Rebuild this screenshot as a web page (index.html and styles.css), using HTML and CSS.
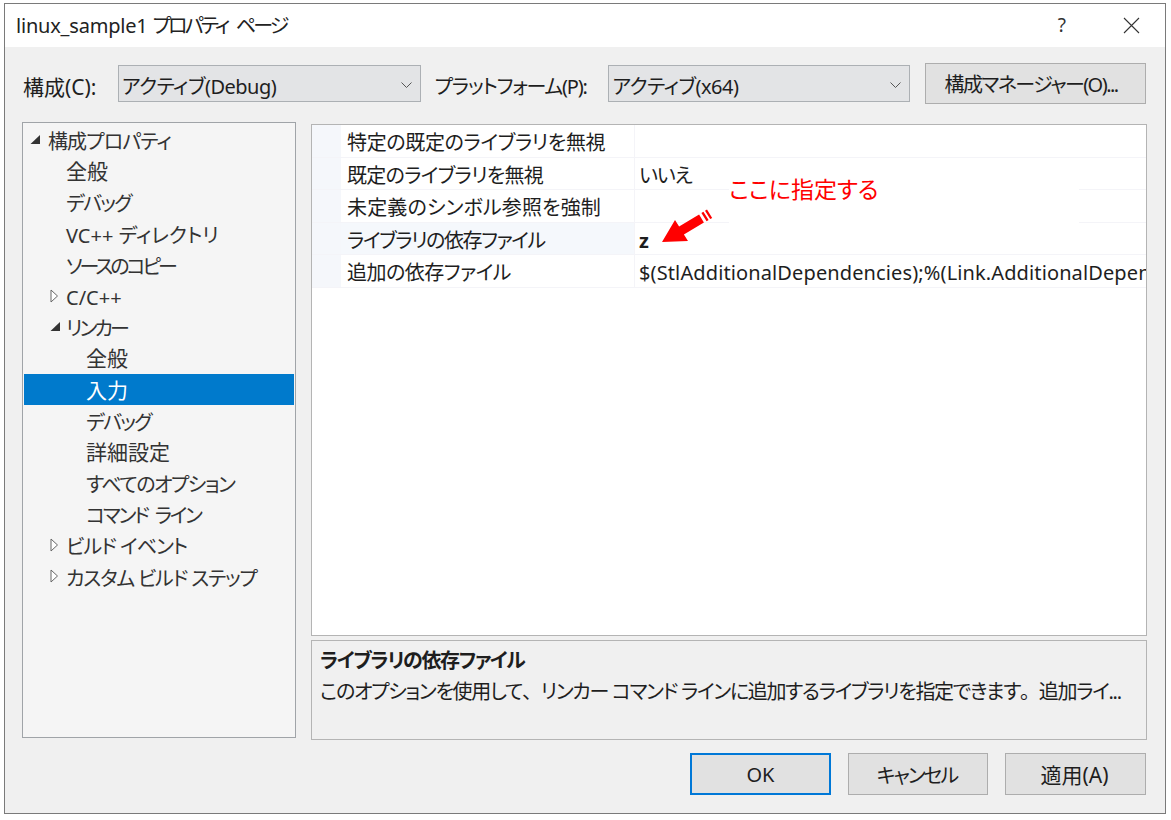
FILE: index.html
```html
<!DOCTYPE html>
<html lang="ja">
<head>
<meta charset="utf-8">
<title>linux_sample1 プロパティ ページ</title>
<link rel="stylesheet" href="styles.css">
</head>
<body>
<div class="window">
  <header class="titlebar">
    <span class="title">linux_sample1 <span class="title-ja">プロパティ ページ</span></span>
    <span class="help">?</span>
    <svg class="close" width="17" height="17" viewBox="0 0 17 17"><path d="M1 1 16 16M16 1 1 16" stroke="#333" stroke-width="1.1" fill="none"/></svg>
  </header>
  <div class="toolbar">
    <span class="label label-config big">構成(C):</span>
    <div class="combo"><span class="ls-05">アクティブ(Debug)</span><svg width="11" height="7" viewBox="0 0 11 7"><path d="M.5 .5 5.5 5.5 10.5 .5" stroke="#555" fill="none"/></svg></div>
    <span class="label label-platform">プラットフォーム(P):</span>
    <div class="combo combo-platform"><span class="ls-05">アクティブ(x64)</span><svg width="11" height="7" viewBox="0 0 11 7"><path d="M.5 .5 5.5 5.5 10.5 .5" stroke="#555" fill="none"/></svg></div>
    <button class="btn btn-manager">構成マネージャー(O)...</button>
  </div>
  <main class="main">
    <nav class="tree">
      <div class="node l0 ls-09"><svg class="tw" width="11" height="10" viewBox="0 0 11 10"><path d="M0.5 9 10 9 10 0Z" fill="#333"/></svg>構成プロパティ</div>
      <div class="node l1 big">全般</div>
      <div class="node l1 ls-17">デバッグ</div>
      <div class="node l1">VC++ ディレクトリ</div>
      <div class="node l1 ls-30">ソースのコピー</div>
      <div class="node l1 arrowed"><svg class="tw" width="9" height="14" viewBox="0 0 9 14"><path d="M1 1 7.5 7 1 13Z" fill="#fff" stroke="#666"/></svg>C/C++</div>
      <div class="node l1 arrowed ls-28"><svg class="tw" width="11" height="10" viewBox="0 0 11 10"><path d="M0.5 9 10 9 10 0Z" fill="#333"/></svg>リンカー</div>
      <div class="node l2 big">全般</div>
      <div class="node l2 selected big">入力</div>
      <div class="node l2 ls-17">デバッグ</div>
      <div class="node l2 big">詳細設定</div>
      <div class="node l2 ls-15">すべてのオプション</div>
      <div class="node l2 ls-cmd">コマンド ライン</div>
      <div class="node l1 arrowed ls-10"><svg class="tw" width="9" height="14" viewBox="0 0 9 14"><path d="M1 1 7.5 7 1 13Z" fill="#fff" stroke="#666"/></svg>ビルド イベント</div>
      <div class="node l1 arrowed ls-12"><svg class="tw" width="9" height="14" viewBox="0 0 9 14"><path d="M1 1 7.5 7 1 13Z" fill="#fff" stroke="#666"/></svg>カスタム ビルド ステップ</div>
    </nav>
    <section class="right">
      <div class="grid">
        <div class="row"><div class="strip"></div><div class="name ls-03">特定の既定のライブラリを無視</div><div class="value"></div></div>
        <div class="row"><div class="strip"></div><div class="name ls-07">既定のライブラリを無視</div><div class="value ls-10">いいえ</div></div>
        <div class="row"><div class="strip"></div><div class="name ls-p">未定義のシンボル参照を強制</div><div class="value"></div></div>
        <div class="row active"><div class="strip"></div><div class="name ls-14">ライブラリの依存ファイル</div><div class="value strong">z</div></div>
        <div class="row"><div class="strip"></div><div class="name ls-05">追加の依存ファイル</div><div class="value latin">$(StlAdditionalDependencies);%(Link.AdditionalDependencies)</div></div>
        <div class="note">ここに指定する</div>
        <svg class="pointer" width="60" height="40" viewBox="0 0 60 40">
          <path d="M0 33 13 11 17.1 17.6 37.1 5.6 41.9 13.4 21.9 25.4 26 32Z" fill="#f00"/>
          <path d="M41.4 2.7 46.6 11.1 44.6 12.3 39.4 3.9ZM45 .5 50.2 8.9 48.2 10.1 43 1.7Z" fill="#f00"/>
        </svg>
      </div>
      <div class="desc">
        <div class="desc-title ls-14">ライブラリの依存ファイル</div>
        <div class="desc-body">このオプションを使用して<span class="punct">、</span>リンカー コマンド ラインに追加するライブラリを指定できます<span class="punct">。</span>追加ライ...</div>
      </div>
    </section>
  </main>
  <footer class="footer">
    <button class="btn btn-foot btn-default">OK</button>
    <button class="btn btn-foot btn-cancel">キャンセル</button>
    <button class="btn btn-foot btn-apply">適用(A)</button>
  </footer>
</div>
</body>
</html>
```

FILE: styles.css
```css
* { box-sizing: border-box; }
html, body { margin: 0; padding: 0; background: #fff; }
body {
  width: 1171px;
  height: 820px;
  overflow: hidden;
  font-family: "Noto Sans", "Noto Sans CJK JP", sans-serif;
  font-size: 20px;
  font-feature-settings: "palt";
  color: #1e1e1e;
}
.big { font-size: 21px; }
.ls-p { letter-spacing: 0.15px; }
.ls-03 { letter-spacing: -0.35px; }
.ls-05 { letter-spacing: -0.5px; }
.ls-07 { letter-spacing: -0.7px; }
.ls-09 { letter-spacing: -0.9px; }
.ls-10 { letter-spacing: -1px; }
.ls-12 { letter-spacing: -1.2px; }
.ls-14 { letter-spacing: -1.4px; }
.ls-15 { letter-spacing: -1.5px; }
.ls-17 { letter-spacing: -1.7px; }
.ls-28 { letter-spacing: -2.8px; }
.ls-30 { letter-spacing: -3px; }
.ls-cmd { letter-spacing: -2.2px; word-spacing: 4px; }
.latin { letter-spacing: 0.12px; }
.window {
  margin: 3px 0 0 4px;
  width: 1162px;
  height: 811px;
  border: 1px solid #7a7a7a;
  background: #f0f0f0;
  display: flex;
  flex-direction: column;
}
.titlebar {
  height: 43px;
  background: #fff;
  display: flex;
  align-items: center;
  padding: 0 25px 0 11px;
}
.title { flex: 1; font-size: 20px; line-height: 1; color: #222; letter-spacing: -0.2px; }
.title-ja { letter-spacing: -2.85px; word-spacing: 6px; }
.help { font-size: 19px; color: #333; margin-right: 57px; line-height: 1; }
.close { display: block; }
.toolbar {
  height: 41px;
  margin-top: 16px;
  padding: 0 19px 0 18px;
  display: flex;
  align-items: center;
}
.label { white-space: nowrap; padding-top: 4px; }
.label-config { width: 95px; }
.label-platform { width: 174px; margin-left: 14px; letter-spacing: -1.2px; }
.combo {
  width: 303px;
  height: 37px;
  margin-top: -1px;
  background: #e3e4e6;
  border: 1px solid #acb0b4;
  display: flex;
  align-items: center;
  justify-content: space-between;
  padding: 4px 8px 0 3px;
}
.combo-platform { width: 302px; }
.btn {
  font: inherit;
  font-feature-settings: inherit;
  color: #1e1e1e;
  background: #e1e1e1;
  border: 1.5px solid #adadad;
  padding: 0;
  border-radius: 0;
}
.btn-manager {
  width: 221px;
  height: 41px;
  margin-left: 15px;
  padding-right: 9px;
  letter-spacing: -1.55px;
}
.main {
  height: 618px;
  margin-top: 18px;
  padding: 0 18px 0 17px;
  display: flex;
  gap: 15px;
}
.tree {
  width: 275px;
  height: 616px;
  background: #f5f5f5;
  border: 1px solid #a0a4a8;
  padding: 1px;
  color: #333;
}
.node {
  height: 31.2px;
  line-height: 36px;
  white-space: nowrap;
  position: relative;
}
.node.big { line-height: 33px; }
.l0 { padding-left: 24px; }
.l1 { padding-left: 42px; }
.l2 { padding-left: 62px; }
.selected { background: #007acc; color: #fff; margin: 0; }
.tw { display: block; position: absolute; top: 50%; transform: translateY(-50%); }
.l0 .tw { left: 6px; }
.arrowed .tw { left: 26px; }
.right {
  width: 836px;
  padding-top: 2px;
  display: flex;
  flex-direction: column;
  gap: 4px;
}
.grid {
  height: 512px;
  background: #fff;
  border: 1px solid #b4b4b4;
  position: relative;
  overflow: hidden;
}
.row {
  height: 32.5px;
  display: flex;
  border-bottom: 1px solid #f4f4f8;
}
.strip { width: 29px; background: #f5f7fb; }
.name {
  width: 294px;
  padding-left: 6px;
  line-height: 35px;
  white-space: nowrap;
  border-right: 1px solid #f4f4f8;
}
.active .name { background: #f5f8fc; }
.value {
  flex: 1;
  min-width: 0;
  padding-left: 4px;
  line-height: 35px;
  white-space: nowrap;
  overflow: hidden;
}
.strong { font-weight: 700; }
.note {
  position: absolute;
  left: 417px;
  top: 49px;
  width: 350px;
  height: 49px;
  background: #fff;
  color: #f00;
  font-size: 23px;
  line-height: 30px;
}
.pointer { position: absolute; left: 350px; top: 84px; overflow: visible; }
.desc {
  height: 100px;
  background: #f0f0f0;
  border: 1px solid #b4b4b4;
  padding: 5px 8px;
}
.desc-title { font-weight: 700; line-height: 30px; }
.desc-body { line-height: 32px; white-space: nowrap; letter-spacing: -1.3px; }
.punct { font-feature-settings: normal; }
.footer {
  margin-top: 13px;
  padding-right: 19px;
  display: flex;
  justify-content: flex-end;
  gap: 17px;
}
.btn-foot { width: 141px; height: 42px; }
.btn-cancel { width: 140px; letter-spacing: -2px; padding-right: 2px; }
.btn-apply { font-size: 21px; padding-right: 2px; }
.btn-default { border: 2px solid #0078d7; }
```
